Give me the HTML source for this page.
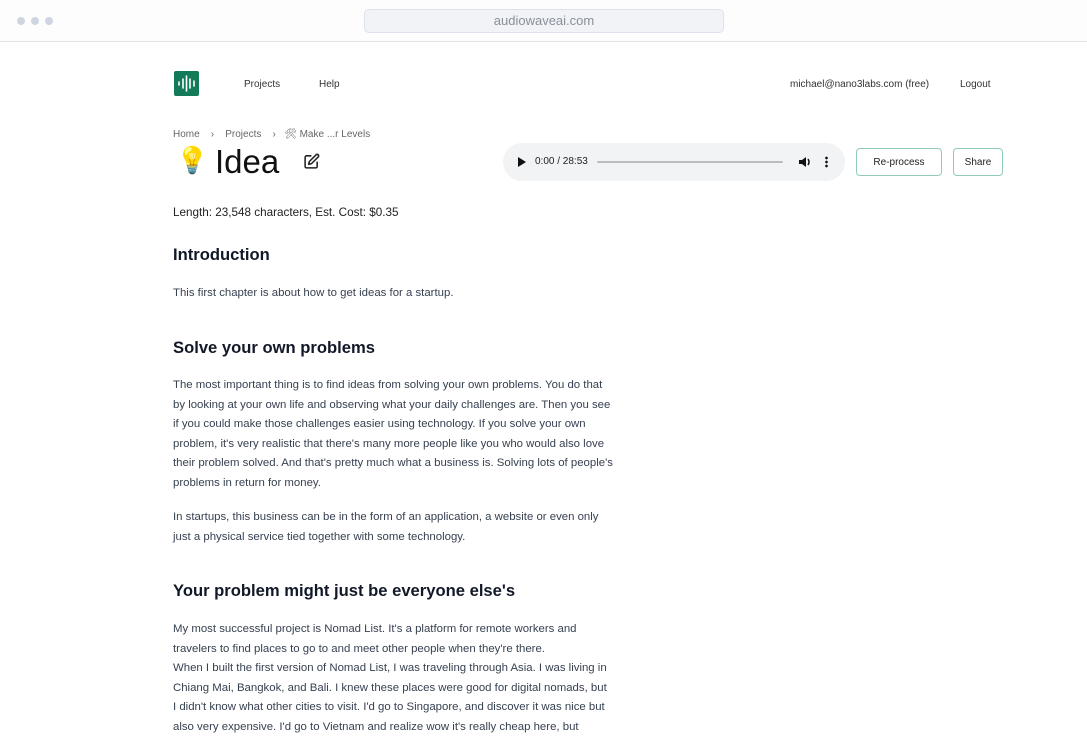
<!DOCTYPE html>
<html><head><meta charset="utf-8"><style>
*{margin:0;padding:0;box-sizing:border-box}
body{width:1087px;height:732px;overflow:hidden;background:#fff;font-family:"Liberation Sans",sans-serif;color:#1f2937;position:relative}
.bar{position:absolute;left:0;top:0;width:1087px;height:42px;background:#fdfdfd;border-bottom:1px solid #e2e2e2}
.dot{position:absolute;top:17px;width:8px;height:8px;border-radius:50%;background:#cfd5e0}
.url{position:absolute;left:364px;top:9px;width:360px;height:24px;border:1px solid #dde2ea;background:#f1f3f7;border-radius:5px;text-align:center;font-size:13px;line-height:22px;color:#8a9099}
.a{position:absolute;white-space:nowrap}
.nav{font-size:10px;color:#333}
h2{position:absolute;left:173px;font-size:16.6px;font-weight:bold;color:#111827}
.p{position:absolute;left:173px;width:440px;font-size:11.4px;line-height:19.6px;color:#374151}
.btn{position:absolute;top:148px;height:28px;border:1px solid #8fcdb8;border-radius:4px;font-size:10px;line-height:27px;text-align:center;color:#222}
</style></head><body>
<div class="bar"><div class="dot" style="left:17px"></div><div class="dot" style="left:31px"></div><div class="dot" style="left:45px"></div><div class="url">audiowaveai.com</div></div>
<div class="a" style="left:174px;top:71px;width:25px;height:25px;background:#137a5a;border-radius:2px">
<svg width="25" height="25"><g stroke="#fff" stroke-width="1.6" stroke-linecap="round"><line x1="5" y1="11" x2="5" y2="14"/><line x1="9" y1="8" x2="9" y2="17"/><line x1="12.5" y1="5" x2="12.5" y2="20"/><line x1="16" y1="8" x2="16" y2="17"/><line x1="20" y1="10" x2="20" y2="15"/></g></svg></div>
<div class="a nav" style="left:244px;top:79px">Projects</div>
<div class="a nav" style="left:319px;top:79px">Help</div>
<div class="a nav" style="left:790px;top:79px">michael@nano3labs.com (free)</div>
<div class="a nav" style="left:960px;top:79px">Logout</div>
<div class="a" style="left:173px;top:129px;font-size:10px;color:#666">Home &nbsp;&nbsp;&nbsp;›&nbsp;&nbsp;&nbsp; Projects &nbsp;&nbsp;&nbsp;›&nbsp;&nbsp; 🛠 Make ...r Levels</div>
<div class="a" style="left:176px;top:145px;font-size:26px">💡</div>
<div class="a" style="left:215px;top:143px;font-size:33px;color:#111">Idea</div>
<svg class="a" style="left:303px;top:153px" width="17" height="17" viewBox="0 0 24 24" fill="none" stroke="#222" stroke-width="2.2" stroke-linecap="round" stroke-linejoin="round"><path d="M11 4H5a2 2 0 0 0-2 2v13a2 2 0 0 0 2 2h13a2 2 0 0 0 2-2v-6"/><path d="M18.5 2.5a2.1 2.1 0 0 1 3 3L12 15l-4 1 1-4z"/></svg>
<div class="a" style="left:503px;top:143px;width:342px;height:38px;background:#f1f3f4;border-radius:19px">
<svg class="a" style="left:14px;top:14px" width="9" height="10"><path d="M1 0L9 5L1 10Z" fill="#111"/></svg>
<div class="a" style="left:32px;top:13px;font-size:10px;color:#222">0:00 / 28:53</div>
<div class="a" style="left:94px;top:18px;width:186px;height:2px;background:#bbb;border-radius:1px"></div>
<svg class="a" style="left:295px;top:12px" width="14" height="14" viewBox="0 0 14 14"><path d="M1 5h3l4-3v10l-4-3H1z" fill="#111"/><path d="M10 4q2 3 0 6" stroke="#111" stroke-width="1.5" fill="none"/></svg>
<div class="a" style="left:322px;top:13px;width:3px;height:12px;background:radial-gradient(circle,#111 1.2px,transparent 1.5px) 0 0/3px 4px"></div>
</div>
<div class="btn" style="left:856px;width:86px">Re-process</div>
<div class="btn" style="left:953px;width:50px">Share</div>
<div class="a" style="left:173px;top:206px;font-size:11.7px;color:#222">Length: 23,548 characters, Est. Cost: $0.35</div>
<h2 style="top:245px">Introduction</h2>
<div class="p" style="top:284px">This first chapter is about how to get ideas for a startup.</div>
<h2 style="top:338px">Solve your own problems</h2>
<div class="p" style="top:376px">The most important thing is to find ideas from solving your own problems. You do that by looking at your own life and observing what your daily challenges are. Then you see if you could make those challenges easier using technology. If you solve your own problem, it's very realistic that there's many more people like you who would also love their problem solved. And that's pretty much what a business is. Solving lots of people's problems in return for money.</div>
<div class="p" style="top:508px">In startups, this business can be in the form of an application, a website or even only just a physical service tied together with some technology.</div>
<h2 style="top:581px">Your problem might just be everyone else's</h2>
<div class="p" style="top:620px">My most successful project is Nomad List. It's a platform for remote workers and travelers to find places to go to and meet other people when they're there.<br>When I built the first version of Nomad List, I was traveling through Asia. I was living in Chiang Mai, Bangkok, and Bali. I knew these places were good for digital nomads, but I didn't know what other cities to visit. I'd go to Singapore, and discover it was nice but also very expensive. I'd go to Vietnam and realize wow it's really cheap here, but</div>
</body></html>
